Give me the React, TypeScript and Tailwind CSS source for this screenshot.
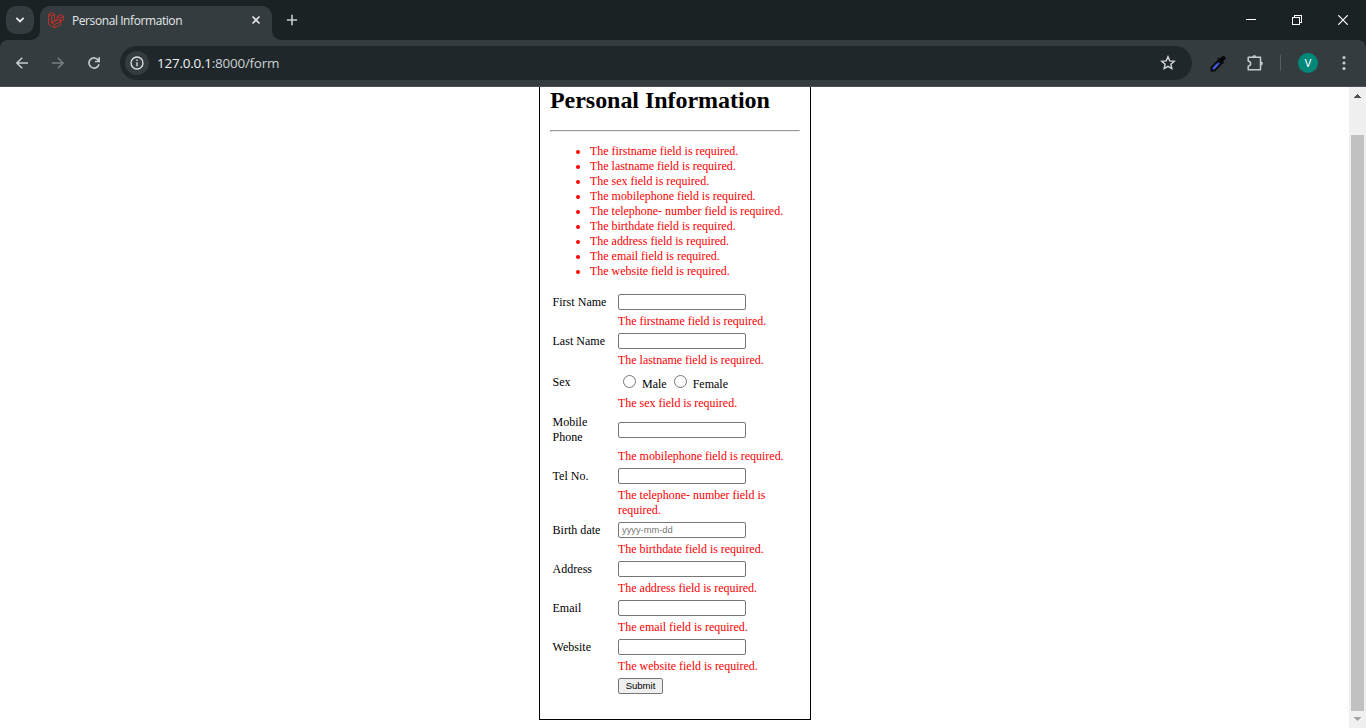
import React from "react";

const errors = [
  "The firstname field is required.",
  "The lastname field is required.",
  "The sex field is required.",
  "The mobilephone field is required.",
  "The telephone- number field is required.",
  "The birthdate field is required.",
  "The address field is required.",
  "The email field is required.",
  "The website field is required.",
];

function TabStrip() {
  return (
    <div className="flex h-10 bg-[#1b2224]">
      <div className="flex w-10 items-center pl-1.5">
        <button className="flex h-7 w-7 items-center justify-center rounded-[10px] bg-[#353c3f]">
          <svg width="10" height="8" viewBox="0 0 10 8" fill="none" stroke="#e3e8e9" strokeWidth="1.8">
            <path d="M1.3 1.8 5 5.5 8.700 1.8" />
          </svg>
        </button>
      </div>
      <div className="relative mt-1.5 flex h-[34px] w-[232px] items-center rounded-t-[10px] bg-[#353c3f] pb-1.5 pl-2">
        <svg className="absolute bottom-0 -left-2.5" width="10" height="10" fill="#353c3f">
          <path d="M10 0v10H0C6 10 10 6 10 0Z" />
        </svg>
        <svg className="absolute bottom-0 -right-2.5" width="10" height="10" fill="#353c3f">
          <path d="M0 0v10h10C4 10 0 6 0 0Z" />
        </svg>
        <svg width="16" height="16" viewBox="0 0 16 16" fill="none" stroke="#cf3028" strokeWidth="0.9" strokeLinejoin="round">
          <path d="M.6 2.300 3.600.6l3 1.700v6.800l2.900-1.600V4.400l3-1.700 3 1.700v3.400l-2.800 1.600v3.300l-6.200 3-5.900-3.400Z" />
          <path d="m.6 2.300 3 1.700 3-1.700M3.600 4v6.800l6.100-3.400 3 1.800M3.600 10.800l3 1.700 6.100-3.100M6.500 12.500v3.200M9.500 4.400l3 1.700 3-1.700M12.500 6.100v3.100M6.600 9.100l-3 1.700" />
        </svg>
        <span className="mt-0.5 ml-2 w-[179px] whitespace-nowrap font-['Open_Sans','Noto_Sans',sans-serif] text-[12px] leading-4 tracking-[-0.42px] text-[#e3e8e9]">
          Personal Information
        </span>
        <svg width="10" height="10" viewBox="0 0 10 10" stroke="#e3e8e9" strokeWidth="1.6">
          <path d="m1.500 1.500 7 7m0-7-7 7" />
        </svg>
      </div>
      <div className="flex flex-1 items-center pl-[14px]">
        <svg width="12" height="12" viewBox="0 0 12 12" stroke="#c5cccd" strokeWidth="1.6">
          <path d="M6 .8v10.400M.8 6h10.400" />
        </svg>
      </div>
      <div className="flex h-10 items-center">
        <div className="flex w-[46px] justify-center">
          <span className="mb-px h-px w-2.5 bg-white" />
        </div>
        <div className="flex w-[46px] justify-center">
          <svg width="10" height="10" viewBox="0 0 10 10" fill="none" stroke="#fff" shapeRendering="crispEdges">
            <path d="M.5 2.500h7v7h-7zM2.500 2V.5h7v7H8" />
          </svg>
        </div>
        <div className="flex w-[46px] justify-center">
          <svg width="10" height="10" viewBox="0 0 10 10" stroke="#fff" strokeWidth="1.200">
            <path d="m.3.3 9.400 9.400m0-9.400L.3 9.700" />
          </svg>
        </div>
      </div>
    </div>
  );
}

function Toolbar() {
  return (
    <div className="bg-[#1b2224]">
      <div className="flex h-[47px] items-center rounded-t-[8px] border-b border-[#4a5053] bg-[#353c3f]">
        <svg className="ml-4" width="12" height="12" viewBox="0 0 12 12" fill="none" stroke="#c5cccd" strokeWidth="1.5">
          <path d="M12 6H1M6.200.7.9 6l5.300 5.300" />
        </svg>
        <svg className="ml-6" width="12" height="12" viewBox="0 0 12 12" fill="none" stroke="#767d80" strokeWidth="1.5">
          <path d="M0 6h11M5.800.7 11.100 6l-5.300 5.300" />
        </svg>
        <svg className="ml-6" width="12" height="12" viewBox="0 0 12 12" fill="none" stroke="#c5cccd" strokeWidth="1.600">
          <path d="M10.500 3.500A5.100 5.100 0 1 0 11 7.200M11.200.2v4.300H7" />
        </svg>
        <div className="ml-5 flex h-[34px] w-[1072px] items-center rounded-full bg-[#1f272a] pr-4 pl-[5px]">
          <span className="flex h-6 w-6 items-center justify-center rounded-full bg-[#353c3f]">
            <svg width="14" height="14" viewBox="0 0 14 14" fill="none" stroke="#dde3e4" strokeWidth="1.300">
              <circle cx="7" cy="7" r="6" />
              <path d="M7 6.200v4M7 3.600v1.500" />
            </svg>
          </span>
          <span className="ml-2 flex-1 whitespace-nowrap font-['Open_Sans','Noto_Sans',sans-serif] text-[13.500px] leading-5 tracking-[-0.25px] text-[#c9cfd1]">
            <span className="text-[#f0f3f4]">127.0.0.1</span>:8000/form
          </span>
          <svg width="16" height="16" viewBox="0 0 16 16" fill="none" stroke="#d2d7d8" strokeWidth="1.400">
            <path d="m8 1.700 1.750 4.150 4.500.4-3.400 2.950 1 4.400L8 11.300l-3.850 2.300 1-4.400-3.400-2.950 4.500-.4Z" />
          </svg>
        </div>
        <svg className="ml-[18px]" width="17" height="17" viewBox="0 0 17 17">
          <path d="M1.500 15.700v-3l6.700-7.100 3.100 3-6.700 7.100Z" fill="#3548b0" stroke="#050505" strokeWidth="1.700" />
          <path d="m7.300 3.500 1.300-1 1.300 1.200L12 1.500c2-1.800 4.800 1 3 2.900l-2.100 2.200 1.100 1.300-1.100 1.200Z" fill="#050505" />
          <path d="m3.700 13.300 3.600-4" stroke="#4860e0" strokeWidth="2" />
        </svg>
        <svg className="ml-5" width="17" height="17" viewBox="0 0 17 17" fill="none" stroke="#c5cccd" strokeWidth="1.500" strokeLinejoin="round">
          <path d="M1.200 2.300h12.300v12.400H1.200v-3.500c3.300-.5 3.300-4.700 0-5.300Z" />
          <path d="M5.700 1.800c.1-1.900 3.300-1.900 3.400 0ZM14 6.700c2 .1 2 3.400 0 3.500Z" fill="#c5cccd" strokeWidth=".6" />
        </svg>
        <span className="ml-4 h-4 w-px bg-[#555d60]" />
        <span className="ml-[17px] flex h-5 w-5 items-center justify-center rounded-full bg-[#00897b] pt-0.5 font-['Roboto',sans-serif] text-[11px] text-white">
          V
        </span>
        <svg className="ml-[24px]" width="4" height="16" fill="#c5cccd">
          <circle cx="2" cy="2.500" r="1.600" />
          <circle cx="2" cy="8" r="1.600" />
          <circle cx="2" cy="13.500" r="1.600" />
        </svg>
      </div>
    </div>
  );
}

function ErrorLine({ children }: { children: React.ReactNode }) {
  return <div className="ml-[66px] w-[172px] py-0.5 tracking-[-0.02px] text-[#ff0000]">{children}</div>;
}

function Field({ label, error, placeholder, tall }: { label: string; error: string; placeholder?: string; tall?: boolean }) {
  return (
    <div>
      <div className={tall ? "flex h-[34px] items-center" : "flex h-5 items-center"}>
        <label className="w-[66px] pr-2 pl-[0.5px] tracking-[0.03px]">{label}</label>
        <input
          type="text"
          placeholder={placeholder}
          className="h-4 w-32 rounded-[2px] border border-[#767676] bg-white px-[3px] font-['Liberation_Sans',Arial,sans-serif] text-[9.300px] leading-3 placeholder:text-[#757575]"
        />
      </div>
      <ErrorLine>{error}</ErrorLine>
    </div>
  );
}

function Radio({ label }: { label: string }) {
  return (
    <label className="flex items-start">
      <input type="radio" name="sex" className="h-[13px] w-[13px] appearance-none rounded-full border border-[#767676] bg-white" />
      <span className="mt-0.5 ml-1.5">{label}</span>
    </label>
  );
}

function FormCard() {
  return (
    <div className="h-[633px] w-[272px] border border-t-0 border-black px-2.5">
      <h1 className="h-[43px] whitespace-nowrap text-[24px] leading-[27px] font-bold tracking-[-0.04px]">Personal Information</h1>
      <hr className="h-[2px] border border-[#9a9a9a] border-r-[#eee] border-b-[#eee]" />
      <ul className="mt-3 list-disc pl-10 whitespace-nowrap tracking-[-0.02px] text-[#ff0000]">
        {errors.map((e) => (
          <li key={e}>{e}</li>
        ))}
      </ul>
      <form className="mt-[13px] pl-[2px]">
        <Field label="First Name" error={errors[0]} />
        <Field label="Last Name" error={errors[1]} />
        <div className="flex h-6 items-start pt-[5px]">
          <span className="w-[71px] pl-[0.5px]">Sex</span>
          <div className="flex gap-[7px]">
            <Radio label="Male" />
            <Radio label="Female" />
          </div>
        </div>
        <ErrorLine>{errors[2]}</ErrorLine>
        <Field label="Mobile Phone" error={errors[3]} tall />
        <Field label="Tel No." error={errors[4]} />
        <Field label="Birth date" error={errors[5]} placeholder="yyyy-mm-dd" />
        <Field label="Address" error={errors[6]} />
        <Field label="Email" error={errors[7]} />
        <Field label="Website" error={errors[8]} />
        <div className="flex h-5 items-center pl-[66px]">
          <button
            type="button"
            className="h-4 w-[45px] rounded-[2px] border border-[#767676] bg-[#efefef] font-['Liberation_Sans',Arial,sans-serif] text-[9.500px] leading-[14px]"
          >
            Submit
          </button>
        </div>
      </form>
    </div>
  );
}

function Scrollbar() {
  return (
    <div className="flex w-[17px] flex-col items-center bg-[#f0f0f0]">
      <svg className="mt-[7px]" width="7" height="4" fill="#505050" shapeRendering="crispEdges">
        <path d="M3 0h1v1h1v1h1v1h1v1H0V3h1V2h1V1h1Z" />
      </svg>
      <div className="mt-[37px] h-[576px] w-[13px] bg-[#c1c1c1]" />
      <svg className="mt-[6px]" width="7" height="4" fill="#a3a3a3" shapeRendering="crispEdges">
        <path d="M0 0h7v1H6v1H5v1H4v1H3V3H2V2H1V1H0Z" />
      </svg>
    </div>
  );
}

export default function App() {
  return (
    <div className="flex h-[728px] w-[1366px] flex-col overflow-hidden bg-white">
      <TabStrip />
      <Toolbar />
      <div className="flex flex-1">
        <main className="flex flex-1 justify-center pl-px font-['Liberation_Serif','Times_New_Roman',serif] text-[12px] leading-[15px] text-black">
          <FormCard />
        </main>
        <Scrollbar />
      </div>
    </div>
  );
}
